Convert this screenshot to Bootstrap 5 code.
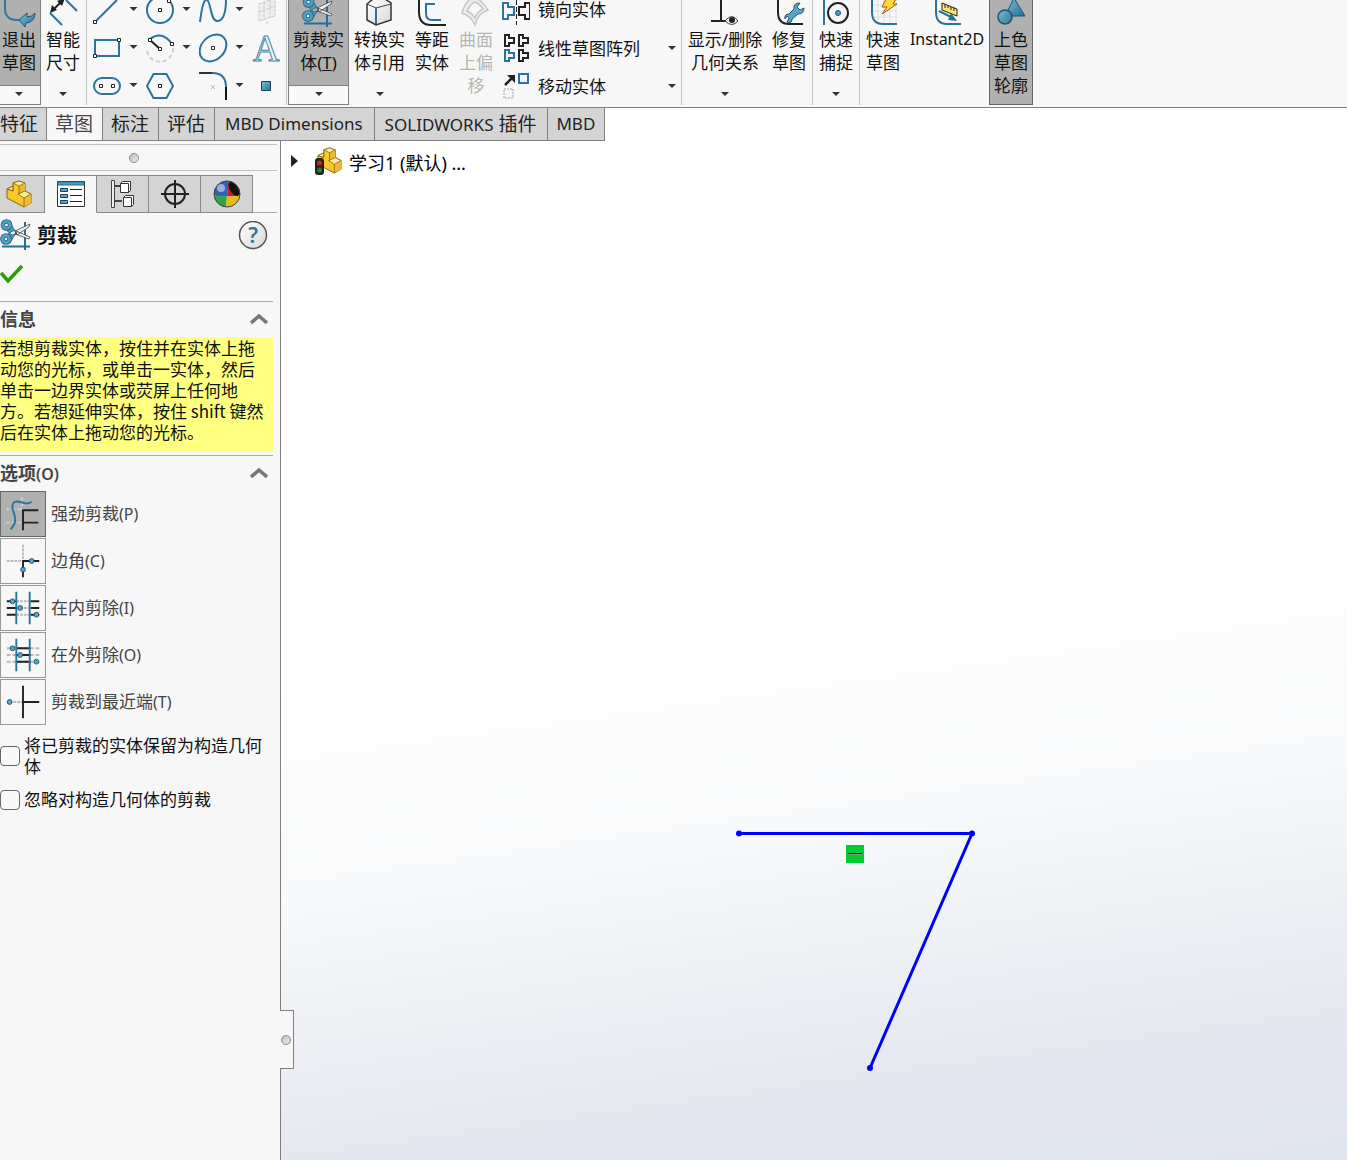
<!DOCTYPE html>
<html lang="zh-CN">
<head>
<meta charset="utf-8">
<meta name="viewport" content="width=device-width, initial-scale=1">
<title>草图 - 剪裁</title>
<link href="https://cdn.jsdelivr.net/npm/bootstrap@5.3.0/dist/css/bootstrap.min.css" rel="stylesheet">
<style>
body{font-family:"Noto Sans","Noto Sans CJK SC",sans-serif;font-size:17px;line-height:23px;color:#111;background:#f7f7f7}
button{font:inherit;color:inherit;background:none;border:0;padding:0}
svg{display:block;flex:none}
.en16{font-size:16px}
.ribbon{background:#f7f7f7;border-bottom:1px solid #808080;height:108px;overflow:hidden}
.ribbon-sep{width:1px;height:105px;margin:0 1px;background:#c4c4c4;flex:none}
.tool{height:105px;flex:none;display:flex;flex-direction:column;align-items:center;white-space:nowrap;position:relative}
.tool .caret{margin-top:auto;margin-bottom:9px}
.t-s{width:44px}.t-m{width:61px}.t-l{width:84px}
.t-exit{width:41px;padding-right:2px}
.split{border-right:1px solid #808080;background:linear-gradient(#b0b0b0 85px,#808080 85px,#808080 86px,#f9f9f9 86px);border-bottom:1px solid #808080}
.split.t-m{border-left:1px solid #808080}
.split .caret{margin-bottom:8px}
.pressed{background:#b0b0b0;border:1px solid #666;border-top:0}
.off{color:#b4b4b4}
.caret{width:0;height:0;border:4px solid transparent;border-top-color:#333;border-bottom:0}
.sk-grid{width:197px;padding-left:5px;display:grid;grid-template-columns:53px 53px 53px 33px;grid-template-rows:29px 38px 38px}
.sk-list{width:182px;padding-left:4px;padding-right:4px}
.sk-list button{display:flex;align-items:center;height:38px;text-align:left;gap:8px;width:100%}
.sk-list button:first-child{height:29px;line-height:20px;align-items:flex-start}
.work{background:linear-gradient(172deg,#fff 50%,#f8f9fa 67%,#eceef3 80%,#e4e7ef 89%,#e0e4ed 100%)}
.cmd-tabs{border-bottom:1px solid #808080}
.cmd-tabs .nav-link{height:32px;line-height:32px;font-size:19px;color:#222;background:#d4d4d4;border-right:1px solid #808080;border-radius:0;padding:0 9px 0 8px}
.cmd-tabs .nav-link.en{padding:0 11px 0 10px}
.en17,.cmd-tabs .nav-link.en17{font-size:17px}
.cmd-tabs .nav-link.active{background:#f7f7f7;color:#444}
.cmd-tabs .nav-item:first-child .nav-link{padding-left:0;padding-right:8px}
.panel{width:281px;flex:none;background:#f7f7f7;border-right:1px solid #808080}
.grip{height:27px;margin-right:3px;margin-top:3px;padding-right:9px;border-top:1px solid #c0c0c0;border-bottom:1px solid #c0c0c0}
.dot{width:10px;height:10px;border-radius:50%;border:1px solid #888;background:linear-gradient(135deg,#bbb,#eee)}
.ptabs{margin:4px 3px 0 0;height:38px;box-shadow:inset 0 -1px #aaa}
.ptabs button{width:52px;background:#d4d4d4;border:1px solid #888;border-left:0;display:flex;align-items:center;justify-content:center}
.ptabs button:first-child{width:45px;padding-right:5px}
.ptabs button.active{background:#f7f7f7;border-bottom-color:#f7f7f7}
.phead{padding:6px 12px 0 0;height:40px}
.ptitle{font-size:20px;font-weight:600;color:#111;margin:0 auto 0 6px}
.sec{margin-right:7px;border-top:1px solid #aaa}
.sec-h{height:35px;font-size:18px;font-weight:600;color:#444;padding-right:5px;width:100%}
.sec-h svg{margin-bottom:2px}
.tip-box{font-family:"Noto Sans CJK SC",sans-serif;background:#ffff80;line-height:21px;padding:0 8px 9px 0;height:114px;color:#111;margin-bottom:4px}
.opts{display:grid;gap:1px}
.opts button{display:flex;align-items:center;gap:5px;color:#444;height:46px;text-align:left}
.opts svg{border:1px solid #999}
.opts .on svg{background:#b0b0b0;border-color:#666}
.checks{line-height:21px;padding-top:10px}
.checks .form-check-input{width:20px;height:20px;border:1px solid #666;border-radius:4px;margin:0;flex:none;background-color:#f9f9f9}
.checks label{padding-right:10px}
.handle{position:absolute;left:-1px;top:869px;width:14px;height:59px;padding-left:1px;background:#f7f7f7;border:1px solid #808080;border-left:0}
.sketch{position:absolute;left:0;top:0}
.tree{padding:5px 0 0 9px;color:#000;font-size:18px}
.tree span{margin:6px 0 0 6px}
</style>
<script src="https://cdn.jsdelivr.net/npm/bootstrap@5.3.0/dist/js/bootstrap.bundle.min.js"></script>
</head>
<body class="min-vh-100 d-flex flex-column">
<svg width="0" height="0" class="position-absolute" aria-hidden="true">
<defs>
<linearGradient id="bl" x1="0" y1="0" x2="1" y2="1"><stop offset="0" stop-color="#7cc0dc"/><stop offset="1" stop-color="#256f96"/></linearGradient>
<linearGradient id="gr" x1="0" y1="0" x2="1" y2="1"><stop offset="0" stop-color="#fff"/><stop offset="1" stop-color="#d8d8d8"/></linearGradient>
<symbol id="scissors" viewBox="0 0 31 31">
<path d="M25 3v28M2 27.500h28" stroke="#256f96" stroke-width="2"/>
<path d="M15 12L30 5l-1 3-12 8zM16 12l14 6-1 2-14-5z" fill="#eee" stroke="#444" stroke-width=".8"/>
<path d="M10 3l5 9 1 3-4 1-6-5zM10 24l4-7 3-3-2-3-4 2-6 4z" fill="#4f9dc0" stroke="#23607f" stroke-width=".8"/>
<g fill="#f7f7f7" stroke="#23607f" stroke-width="4.500"><circle cx="6.500" cy="6" r="3.600"/><circle cx="6" cy="20" r="3.600"/></g>
<g fill="none" stroke="#4f9dc0" stroke-width="3"><circle cx="6.500" cy="6" r="3.600"/><circle cx="6" cy="20" r="3.600"/></g></symbol>
<symbol id="cubes" viewBox="0 0 27 28">
<path d="M7 3l6-2 6 2v8l6 3v9l-7 4L1 18V9l6-3z" fill="#f9c82c" stroke="#8a6508"/>
<path d="M18 18l7-4v9l-7 4zM13 6l6-3v8l-6 3z" fill="#eeb93a"/>
<path d="M7 3l6-2 6 2-6 3zM12 14l7-3 6 3-7 4zM1 9l6-3v5z" fill="#fdeb9c" stroke="#8a6508" stroke-width=".8"/>
<path d="M13 6v8M18 18v9M7 6v5l-6-2" fill="none" stroke="#8a6508" stroke-width=".8"/></symbol>
</defs></svg>

<header class="ribbon d-flex">
<button class="tool split t-exit"><svg width="38" height="28" viewBox="0 0 38 28"><path d="M5 0v8q0 12 12 12h4" fill="none" stroke="#2f7a9f" stroke-width="2"/><path d="M19 20l8-7v4q5 0 8-4 0 9-9 10l-1 4z" fill="url(#bl)" stroke="#1d5573"/></svg><span>退出<br>草图</span><span class="caret"></span></button>
<button class="tool t-s"><svg width="44" height="28" viewBox="41 0 44 28"><path d="M50 13l12 12M66 0l11 11" stroke="#2b7598" stroke-width="2"/><path d="M53 10L63 0" stroke="#222" stroke-width="2"/><path d="M50 13l2-8 5 5zM65-2l-8 3 5 5z" fill="#222"/></svg><span>智能<br>尺寸</span><span class="caret"></span></button>
<div class="ribbon-sep"></div>
<div class="sk-grid">
<button aria-label="直线"><svg width="53" height="29" viewBox="93 0 53 29"><path d="M95 22L117 0" stroke="#2b7598" stroke-width="2"/><path d="M93.500 20.500h3v3h-3z" fill="#fff" stroke="#222"/><path d="M129.500 7h8l-4 4z" fill="#333"/></svg></button>
<button aria-label="圆"><svg width="53" height="29" viewBox="146 0 53 29"><circle cx="160" cy="10" r="13" fill="none" stroke="#2b7598" stroke-width="2"/><path d="M158.500 8.500h3v3h-3zM167.500-.5h3v3h-3z" fill="#fff" stroke="#222"/><path d="M182.500 7h8l-4 4z" fill="#333"/></svg></button>
<button aria-label="样条曲线"><svg width="53" height="29" viewBox="199 0 53 29"><path d="M200 22C202 5 205-4 208 1c3 4 3 20 9 20 7 0 9-11 9-22" fill="none" stroke="#2b7598" stroke-width="2"/><path d="M235.500 7h8l-4 4z" fill="#333"/></svg></button>
<button aria-label="基准面"><svg width="33" height="29" viewBox="252 0 33 29"><path d="M259 4l16-6v18l-16 5zM259 12l16-6M264 2v18M270 0v18M267 21v4" fill="#eee" stroke="#c8c8c8" stroke-dasharray="3 1"/></svg></button>
<button aria-label="矩形"><svg width="53" height="38" viewBox="93 29 53 38"><path d="M95 40h24v16H95z" fill="none" stroke="#2b7598" stroke-width="2"/><path d="M117.500 38.500h3v3h-3zM93.500 54.500h3v3h-3z" fill="#fff" stroke="#222"/><path d="M129.500 45h8l-4 4z" fill="#333"/></svg></button>
<button aria-label="圆弧"><svg width="53" height="38" viewBox="146 29 53 38"><path d="M147 51a13 13 0 0 0 26-5" fill="none" stroke="#ccc" stroke-width="2" stroke-dasharray="4 3"/><path d="M150 39q12-9 22 5" fill="none" stroke="#2b7598" stroke-width="2"/><path d="M150 40l10 9" stroke="#222" stroke-width="2"/><path d="M148.500 38.500h3v3h-3zM158.500 47.500h3v3h-3zM170.500 42.500h3v3h-3z" fill="#fff" stroke="#222"/><path d="M182.500 45h8l-4 4z" fill="#333"/></svg></button>
<button aria-label="椭圆"><svg width="53" height="38" viewBox="199 29 53 38"><ellipse cx="213" cy="48" rx="15" ry="11.500" transform="rotate(-45 213 48)" fill="none" stroke="#2b7598" stroke-width="2"/><path d="M211.500 46.500h3v3h-3z" fill="#fff" stroke="#222"/><path d="M235.500 45h8l-4 4z" fill="#333"/></svg></button>
<button aria-label="文字"><svg width="33" height="38" viewBox="252 29 33 38"><text x="266" y="61" text-anchor="middle" font-family="Liberation Serif,serif" font-size="37" fill="#f7f7f7" stroke="#3f87a8">A</text></svg></button>
<button aria-label="槽口"><svg width="53" height="38" viewBox="93 67 53 38"><rect x="94" y="78" width="26" height="16" rx="8" fill="none" stroke="#2b7598" stroke-width="2"/><path d="M99.500 84.500h3v3h-3zM111.500 84.500h3v3h-3z" fill="#fff" stroke="#222"/><path d="M129.500 83h8l-4 4z" fill="#333"/></svg></button>
<button aria-label="多边形"><svg width="53" height="38" viewBox="146 67 53 38"><path d="M153.500 74h13l6.500 12-6.500 12h-13L147 86z" fill="none" stroke="#2b7598" stroke-width="2"/><path d="M158.500 84.500h3v3h-3z" fill="#fff" stroke="#222"/></svg></button>
<button aria-label="圆角"><svg width="53" height="38" viewBox="199 67 53 38"><path d="M199 73h14" stroke="#333" stroke-width="2"/><path d="M212 73q14 0 14 14" fill="none" stroke="#2b7598" stroke-width="2"/><path d="M226 87v13" stroke="#111" stroke-width="2"/><path d="M211 85l4 4m0-4l-4 4" stroke="#bbb"/><path d="M235.500 83h8l-4 4z" fill="#333"/></svg></button>
<button aria-label="点"><svg width="33" height="38" viewBox="252 67 33 38"><path d="M261.500 81.500h9v9h-9z" fill="url(#bl)" stroke="#173f55"/></svg></button>
</div>
<div class="ribbon-sep"></div>
<button class="tool split t-m"><svg width="59" height="28" viewBox="289 0 59 28"><use href="#scissors" x="302" y="-4" width="31" height="31"/></svg><span>剪裁实<br>体(<u>T</u>)</span><span class="caret"></span></button>
<button class="tool t-m"><svg width="61" height="28" viewBox="349 0 61 28"><path d="M367 4l6-5h12l6 4v17l-15 5-9-5z" fill="url(#gr)" stroke="#333" stroke-width="1.500"/><path d="M367 4l9 4 15-4" fill="none" stroke="#444"/><path d="M376 8v16" stroke="#2b7598" stroke-width="2"/></svg><span>转换实<br>体引用</span><span class="caret"></span></button>
<button class="tool t-s"><svg width="44" height="28" viewBox="410 0 44 28"><path d="M419 0v12q0 13 12 13h15" fill="none" stroke="#222" stroke-width="2"/><path d="M435 4h-9v9q0 7 6 7h9" fill="none" stroke="#2b7598" stroke-width="2"/></svg><span>等距<br>实体</span></button>
<button class="tool t-s off" disabled><svg width="44" height="28" viewBox="454 0 44 28"><path d="M462 13Q465 1 474-3q8 3 14 13-10 3-13 15-4-9-13-12z" fill="#eee" stroke="#c6c6c6" stroke-width="1.500"/><path d="M467 11q3-7 8-9 5 2 8 7-6 3-8 9-3-5-8-7z" fill="#f7f7f7" stroke="#c6c6c6" stroke-width="1.500"/></svg><span>曲面<br>上偏<br>移</span></button>
<div class="sk-list">
<button><svg width="28" height="28" viewBox="502 0 28 28"><path d="M503 3h5v4h6v8h-6v4h-5z" fill="none" stroke="#2b7598" stroke-width="2"/><path d="M530 3h-5v4h-6v8h6v4h5z" fill="none" stroke="#222" stroke-width="2"/><path d="M516.500 0v25" stroke="#222" stroke-dasharray="5 2"/></svg>镜向实体</button>
<button><svg width="28" height="38" viewBox="502 29 28 38"><g fill="none" stroke="#222" stroke-width="2"><path id="tt" d="M505 35h4v3h5v5h-5v3h-4z"/><use href="#tt" x="14"/><use href="#tt" x="14" y="15"/></g><path d="M505 50h4v3h5v5h-5v3h-4z" fill="none" stroke="#2b7598" stroke-width="2"/></svg>线性草图阵列<span class="caret ms-auto"></span></button>
<button><svg width="28" height="38" viewBox="502 67 28 38"><path d="M505 85l7-7" stroke="#222" stroke-width="2.500"/><path d="M507 75h8v8z" fill="#222"/><path d="M519 74h9v9h-9z" fill="none" stroke="#2b7598" stroke-width="2"/><path d="M504 89h9v9h-9z" fill="none" stroke="#ccc" stroke-width="2" stroke-dasharray="2 1"/></svg>移动实体<span class="caret ms-auto"></span></button>
</div>
<div class="ribbon-sep"></div>
<button class="tool t-l"><svg width="84" height="28" viewBox="683 0 84 28"><path d="M721 0v21M711 21h17" stroke="#222" stroke-width="2"/><path d="M725 21q7-9 13 0-6 7-13 0z" fill="#eee" stroke="#444"/><circle cx="732" cy="20" r="3" fill="#222"/></svg><span>显示/删除<br>几何关系</span><span class="caret"></span></button>
<button class="tool t-s"><svg width="44" height="28" viewBox="767 0 44 28"><path d="M778 0v12q0 12 11 12h14" fill="none" stroke="#222" stroke-width="2"/><path d="M785 19q-1-5 4-5l5-5q-1-6 6-6l-3 4 3 3 4-2q0 6-6 6l-6 5q0 5-5 3l2-4-2-2z" fill="#5aa6c8" stroke="#1d5573"/></svg><span>修复<br>草图</span></button>
<div class="ribbon-sep"></div>
<button class="tool t-s"><svg width="44" height="28" viewBox="814 0 44 28"><path d="M824 0v25" stroke="#2b7598" stroke-width="2"/><circle cx="838" cy="13" r="10" fill="none" stroke="#222" stroke-width="2"/><circle cx="838" cy="13" r="2.500" fill="#4f9dc0" stroke="#1d5573"/></svg><span>快速<br>捕捉</span><span class="caret"></span></button>
<div class="ribbon-sep"></div>
<button class="tool t-s"><svg width="44" height="28" viewBox="861 0 44 28"><path d="M872 5h26M872 11h26M872 17h26M878 0v25M884 0v25M890 0v25M896 0v25" stroke="#ddd"/><path d="M872 0v12q0 12 11 12h14" fill="none" stroke="#2b7598" stroke-width="2"/><path d="M886-1h10l-3 5h4L882 14l5-7h-5z" fill="#ffd83a" stroke="#a5551c"/></svg><span>快速<br>草图</span></button>
<button class="tool t-l"><svg width="84" height="28" viewBox="905 0 84 28"><path d="M936 0v12q0 12 11 12h14" fill="none" stroke="#2b7598" stroke-width="2"/><path d="M942 3l15 6v7l-15-6z" fill="#ffe36b" stroke="#222"/><path d="M945 4v4M948 5v3M951 7v3M954 8v3" stroke="#222"/><path d="M939 11l12 6" stroke="#256f96" stroke-width="2"/><path d="M951 13l6 8-9-1z" fill="#256f96"/></svg><span class="en16">Instant2D</span></button>
<button class="tool t-s pressed"><svg width="42" height="28" viewBox="990 0 42 28"><path d="M1014-2l11 18h-20z" fill="url(#bl)" stroke="#1d5573"/><circle cx="1005" cy="17" r="7" fill="url(#bl)" fill-opacity=".9" stroke="#1d5573" stroke-width="1.500"/></svg><span>上色<br>草图<br>轮廓</span></button>
</header>

<div class="work flex-grow-1 d-flex flex-column">
<ul class="nav cmd-tabs align-self-start">
<li class="nav-item"><a class="nav-link" href="#">特征</a></li>
<li class="nav-item"><a class="nav-link active" href="#">草图</a></li>
<li class="nav-item"><a class="nav-link" href="#">标注</a></li>
<li class="nav-item"><a class="nav-link" href="#">评估</a></li>
<li class="nav-item"><a class="nav-link en en17" href="#">MBD Dimensions</a></li>
<li class="nav-item"><a class="nav-link en" href="#"><span class="en17">SOLIDWORKS</span> 插件</a></li>
<li class="nav-item"><a class="nav-link en17" href="#">MBD</a></li>
</ul>
<div class="d-flex flex-grow-1">
<aside class="panel">
<div class="grip d-flex align-items-center justify-content-center"><span class="dot"></span></div>
<div class="ptabs d-flex">
<button aria-label="设计树"><svg width="27" height="28"><use href="#cubes"/></svg></button>
<button class="active" aria-label="属性"><svg width="28" height="28" viewBox="0 0 28 28"><path d="M.5 1.500h27v25H.5z" fill="#fff" stroke="#333"/><path d="M1 2h26v3H1z" fill="#4f9dc0" stroke="#256f96"/><path d="M3.500 8.500h7v3h-7zM3.500 14.500h7v3h-7zM3.500 20.500h7v3h-7z" fill="#5aa6c8" stroke="#173f55"/><path d="M13 9.500h12M13 15.500h12M13 21.500h12" stroke="#222"/></svg></button>
<button aria-label="配置"><svg width="28" height="28" viewBox="0 0 28 28"><path d="M2.500.5h3v27h-3z" fill="#eee" stroke="#444"/><path d="M5 6h7M5 21h8" stroke="#444" stroke-width="2"/><path d="M11.500 3.500l2-2h8v9l-2 2h-8zM14.500 17.500l2-2h8v9l-2 2h-8z" fill="#fff" stroke="#333"/><path d="M11.500 3.500h8v9M14.500 17.500h8v9" fill="none" stroke="#333"/></svg></button>
<button aria-label="尺寸专家"><svg width="28" height="28" viewBox="0 0 28 28"><circle cx="14" cy="14" r="10" fill="none" stroke="#222" stroke-width="2"/><path d="M14 0v28M0 14h28" stroke="#222" stroke-width="2"/></svg></button>
<button aria-label="外观"><svg width="28" height="28" viewBox="0 0 28 28"><path d="M14 16L16 1A13 13 0 0 0 1 15q6 3 13 1z" fill="#2c62b8"/><path d="M14 16l2-15a13 13 0 0 1 11 14q-6 2-13 1z" fill="#c81e1e"/><path d="M14 16q-7 2-13-1a13 13 0 0 0 12 12z" fill="#2fa53c"/><path d="M14 16q7 1 13-1a13 13 0 0 1-14 12z" fill="#e8bc1c"/><ellipse cx="21" cy="9" rx="4" ry="8" transform="rotate(-35 21 9)" fill="#111"/><circle cx="8" cy="8" r="4" fill="#fff" opacity=".5"/><circle cx="14" cy="14" r="13" fill="none" stroke="#444"/></svg></button>
</div>
<div class="phead d-flex align-items-center">
<svg width="31" height="36" viewBox="0 0 31 36"><use href="#scissors" y="1" width="31" height="31"/></svg>
<h1 class="ptitle">剪裁</h1>
<button aria-label="帮助"><svg width="30" height="30" viewBox="0 0 30 30"><circle cx="15" cy="14" r="13.500" fill="url(#gr)" stroke="#555" stroke-width="1.500"/><text x="15" y="22" text-anchor="middle" font-size="21" font-weight="600" fill="#2b7598">?</text></svg></button>
</div>
<button class="d-block pt-2 mb-3" aria-label="确定"><svg width="25" height="24" viewBox="0 0 25 24"><path d="M1 12l7 8L22 5" fill="none" stroke="#2f9a0c" stroke-width="3.500"/></svg></button>
<section class="sec">
<button class="sec-h d-flex align-items-center justify-content-between">信息<svg width="18" height="12" viewBox="0 0 18 12"><path d="M1 10l8-7 8 7" fill="none" stroke="#777" stroke-width="3.500"/></svg></button>
<div class="tip-box">若想剪裁实体，按住并在实体上拖动您的光标，或单击一实体，然后单击一边界实体或荧屏上任何地方。若想延伸实体，按住 shift 键然后在实体上拖动您的光标。</div>
</section>
<section class="sec">
<button class="sec-h d-flex align-items-center justify-content-between"><span>选项<span class="en16">(O)</span></span><svg width="18" height="12" viewBox="0 0 18 12"><path d="M1 10l8-7 8 7" fill="none" stroke="#777" stroke-width="3.500"/></svg></button>
<div class="opts">
<button class="on"><svg width="46" height="46" viewBox="0 0 46 46"><path d="M5 18h17M5 32h17M22 5v14" stroke="#ccc" stroke-width="2" stroke-dasharray="4 2"/><path d="M39 19H23v21M23 32h16" fill="none" stroke="#222" stroke-width="2"/><path d="M10 39c9-9 3-16 2-22-1-10 7-7 14-5q4 0 6-2" fill="none" stroke="#2b7598" stroke-width="2"/></svg><span>强劲剪裁<span class="en16">(P)</span></span></button>
<button><svg width="46" height="46" viewBox="0 0 46 46"><path d="M6 23h17M23 6v17" stroke="#bbb" stroke-width="2" stroke-dasharray="3 1"/><path d="M40 23H23v17" fill="none" stroke="#222" stroke-width="2"/><g fill="#5aa6c8" stroke="#1d5573"><circle cx="32" cy="23" r="2.500"/><circle cx="23" cy="32" r="2.500"/></g></svg><span>边角<span class="en16">(C)</span></span></button>
<button><svg width="46" height="46" viewBox="0 0 46 46"><path d="M16 16h15M16 23h15M16 30h15" stroke="#bbb" stroke-width="2" stroke-dasharray="3 1"/><path d="M6 16h10M6 23h10M6 30h10M31 16h9M31 23h9M31 30h9" stroke="#222" stroke-width="2"/><path d="M16 6v34M30 6v34" stroke="#2b7598" stroke-width="2"/><g fill="#5aa6c8" stroke="#1d5573"><circle cx="12" cy="16" r="2.500"/><circle cx="20" cy="23" r="2.500"/><circle cx="37" cy="30" r="2.500"/></g></svg><span>在内剪除<span class="en16">(I)</span></span></button>
<button><svg width="46" height="46" viewBox="0 0 46 46"><path d="M6 16h34M6 23h34M6 30h34" stroke="#bbb" stroke-width="2" stroke-dasharray="4 2"/><path d="M16 16h15M16 23h15M16 30h15" stroke="#222" stroke-width="2"/><path d="M16 6v34M30 6v34" stroke="#2b7598" stroke-width="2"/><g fill="#5aa6c8" stroke="#1d5573"><circle cx="12" cy="16" r="2.500"/><circle cx="20" cy="23" r="2.500"/><circle cx="37" cy="30" r="2.500"/></g></svg><span>在外剪除<span class="en16">(O)</span></span></button>
<button><svg width="46" height="46" viewBox="0 0 46 46"><path d="M9 23h14" stroke="#bbb" stroke-width="2" stroke-dasharray="3 1"/><path d="M23 6v34M23 23h17" stroke="#222" stroke-width="2"/><circle cx="9" cy="23" r="2.500" fill="#5aa6c8" stroke="#1d5573"/></svg><span>剪裁到最近端<span class="en16">(T)</span></span></button>
</div>
<div class="checks d-grid gap-2">
<div class="d-flex align-items-center gap-1 pb-1"><input class="form-check-input" type="checkbox" id="keep"><label for="keep">将已剪裁的实体保留为构造几何体</label></div>
<div class="d-flex align-items-center gap-1"><input class="form-check-input" type="checkbox" id="skip"><label for="skip">忽略对构造几何体的剪裁</label></div>
</div>
</section>
</aside>
<main class="flex-grow-1 position-relative">
<div class="tree d-flex align-items-start">
<svg width="8" height="28" viewBox="0 0 8 28"><path d="M1 9l7 6-7 6z" fill="#222"/></svg>
<svg class="ms-3" width="29" height="29" viewBox="0 0 29 29"><use href="#cubes" x="3" y="1" width="26" height="27"/><rect x="1" y="12" width="9" height="17" rx="3" fill="#222"/><circle cx="5.500" cy="17" r="2.500" fill="#d22"/><circle cx="5.500" cy="24" r="2.500" fill="#2a7a35"/></svg>
<span>学习1 (默认) ...</span>
</div>
<svg class="sketch" width="700" height="940" viewBox="281 141 700 940"><path d="M739 833.500h233L870 1068" fill="none" stroke="#00f" stroke-width="3"/><g fill="#00f"><circle cx="739" cy="833.500" r="3"/><circle cx="972" cy="833.500" r="3"/><circle cx="870" cy="1068" r="3"/></g><path d="M846 845h18v18h-18z" fill="#0c3"/><path d="M848 853.500h14" stroke="#111"/><path d="M848 854.500h14" stroke="#888"/></svg>
<div class="handle d-flex align-items-center"><span class="dot"></span></div>
</main>
</div>
</div>
</body>
</html>
